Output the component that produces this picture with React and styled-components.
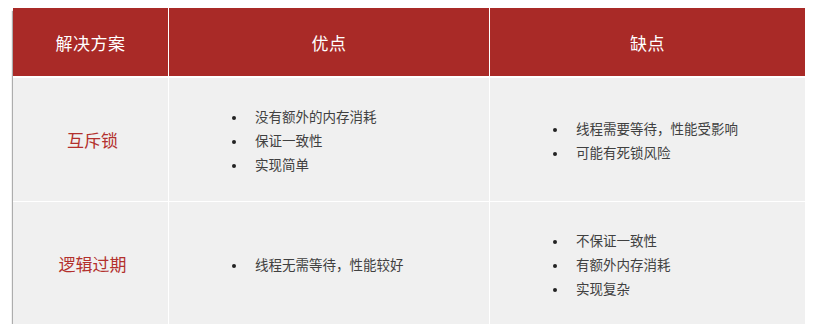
import React from "react";
import styled, { createGlobalStyle } from "styled-components";

const GlobalStyle = createGlobalStyle`
  html, body {
    margin: 0;
    padding: 0;
    background: #ffffff;
  }
  body {
    font-family: "Liberation Serif", "Noto Sans CJK SC", serif;
  }
`;

const rows = [
  {
    name: "互斥锁",
    pros: ["没有额外的内存消耗", "保证一致性", "实现简单"],
    cons: ["线程需要等待，性能受影响", "可能有死锁风险"],
  },
  {
    name: "逻辑过期",
    pros: ["线程无需等待，性能较好"],
    cons: ["不保证一致性", "有额外内存消耗", "实现复杂"],
  },
];

export default function App() {
  return (
    <>
      <GlobalStyle />
      <StyledPage>
        <StyledTable>
          <StyledHead>解决方案</StyledHead>
          <StyledHead>优点</StyledHead>
          <StyledHead>缺点</StyledHead>
          {rows.map((row) => (
            <React.Fragment key={row.name}>
              <StyledName>{row.name}</StyledName>
              <StyledCell>
                <StyledList $shift={row.pros.length === 1 ? 5 : 5}>
                  {row.pros.map((item) => (
                    <StyledItem key={item}>{item}</StyledItem>
                  ))}
                </StyledList>
              </StyledCell>
              <StyledCell>
                <StyledList $shift={row.cons.length === 2 ? 5 : 5}>
                  {row.cons.map((item) => (
                    <StyledItem key={item}>{item}</StyledItem>
                  ))}
                </StyledList>
              </StyledCell>
            </React.Fragment>
          ))}
        </StyledTable>
      </StyledPage>
    </>
  );
}

const StyledPage = styled.div`
  padding: 8px 0 0 13px;
`;

const StyledTable = styled.div`
  width: 792px;
  display: grid;
  grid-template-columns: 155px 320px 315px;
  grid-template-rows: 69px 123px 122px;
  gap: 1px;
  background-color: #ffffff;
  box-shadow: -1px 3px 1px rgba(0, 0, 0, 0.32);
`;

const StyledHead = styled.div`
  background-color: #a92a27;
  color: #ffffff;
  display: flex;
  align-items: center;
  justify-content: center;
  font-size: 17px;
  border-bottom: 1px solid #ffffff;
  letter-spacing: 0.5px;
`;

const StyledName = styled.div`
  background-color: #f0f0f0;
  color: #b3302d;
  display: flex;
  align-items: center;
  justify-content: center;
  padding-left: 4px;
  font-size: 17px;
`;

const StyledCell = styled.div`
  background-color: #f0f0f0;
  display: flex;
  align-items: center;
  padding-left: 62px;
`;

const StyledList = styled.ul`
  margin: ${(p) => p.$shift}px 0 0 0;
  padding: 0;
  list-style: none;
`;

const StyledItem = styled.li`
  position: relative;
  padding-left: 24px;
  font-size: 13.5px;
  line-height: 24px;
  color: #404040;
  &::before {
    content: "";
    position: absolute;
    left: 1px;
    top: 10px;
    width: 4px;
    height: 4px;
    border-radius: 50%;
    background: #222222;
  }
`;
